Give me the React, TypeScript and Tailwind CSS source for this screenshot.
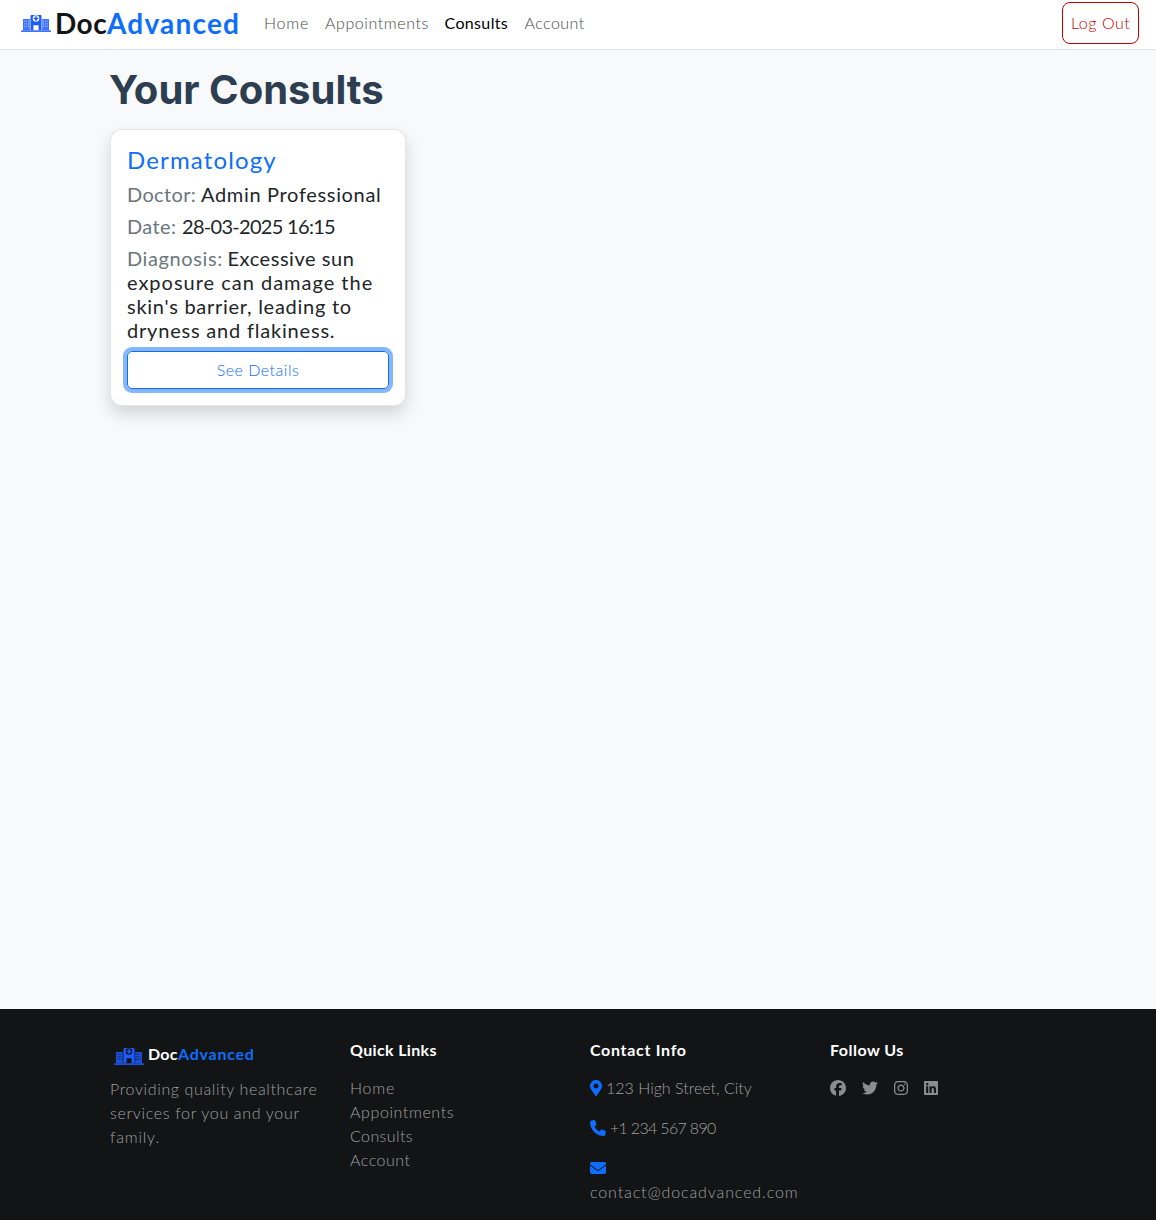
import { FaEnvelope, FaFacebook, FaInstagram, FaLinkedin, FaPhone, FaTwitter } from "react-icons/fa6";
import { FaMapMarkerAlt } from "react-icons/fa";

function HospitalIcon() {
  return (
    <svg viewBox="0 0 30 17" className="block h-[17px] w-[30px] shrink-0" fill="#1c5bff">
      <path fillOpacity="0.85" d="M2 4h6.800v11.300H2zM21.200 4H28v11.300h-6.800z" />
      <path
        fillRule="evenodd"
        d="M9.500 1q0-1 1-1h9q1 0 1 1v14.300h-2.900V10.200h-5.200v5.100H9.500zM15 .2a3.300 3.300 0 1 0 0 6.600a3.300 3.300 0 0 0 0-6.600z"
      />
      <path d="M14.200 1.200h1.600v1.500h1.500v1.600h-1.500v1.500h-1.600V4.300h-1.500V2.700h1.500z" />
      <path
        className="fill-white/45 in-[footer]:fill-[#121416]/55"
        d="M3.200 5.600h1.200v1.200H3.200zM5.100 5.600h1.200v1.200H5.100zM7 5.600h1.200v1.200H7zM3.200 8.200h1.200v1.200H3.200zM5.100 8.200h1.200v1.200H5.100zM7 8.200h1.200v1.200H7zM3.200 10.800h1.200V12H3.200zM5.100 10.800h1.200V12H5.100zM7 10.800h1.200V12H7zM21.800 5.600H23v1.200h-1.200zM23.700 5.600h1.200v1.200h-1.200zM25.600 5.600h1.200v1.200h-1.200zM21.800 8.200H23v1.200h-1.200zM23.700 8.200h1.200v1.200h-1.200zM25.600 8.200h1.200v1.200h-1.200zM21.800 10.800H23V12h-1.200zM23.700 10.800h1.200V12h-1.200zM25.600 10.800h1.200V12h-1.200z"
      />
      <path fillOpacity="0.85" d="M.6 15.300h28.800q.6 0 .6.900t-.6.800H.6q-.6 0-.6-.8t.6-.9z" />
    </svg>
  );
}

export default function App() {
  return (
    <div className="flex h-[1220px] flex-col overflow-hidden bg-[#f8f9fa] font-['Lato',sans-serif] text-base leading-6 whitespace-nowrap text-[#212529]">
      <header className="flex h-[50px] shrink-0 items-start border-b border-[#dee2e6] bg-white pr-[17px] pl-[21px]">
        <a className="flex h-[46px] w-[235px] items-center">
          <div className="pt-px">
            <HospitalIcon />
          </div>
          <span className="ml-1 flex text-[28px] leading-[42px] font-bold">
            <span className="w-[52px] tracking-[0.5px] text-[#121416]">Doc</span>
            <span className="tracking-[1.2px] text-[#0d6efd]">Advanced</span>
          </span>
        </a>
        <nav className="flex h-[46px] items-center font-light text-[#4a4a4a]">
          <a className="ml-2 w-[61px] tracking-[0.75px]">Home</a>
          <a className="w-[119.500px] tracking-[0.58px]">Appointments</a>
          <a className="w-[80px] font-normal tracking-[0.35px] text-black">Consults</a>
          <a className="tracking-[0.45px]">Account</a>
        </nav>
        <button className="mt-[2px] ml-auto h-[42px] w-[77px] rounded-lg border border-[#c00000] pl-[8px] text-left font-light tracking-[0.55px] text-[#c00000]">
          Log Out
        </button>
      </header>

      <main className="mx-auto w-[936px] grow">
        <h1 className="mt-[16px] -ml-px font-['Inter',sans-serif] text-[40px] leading-[48px] font-bold text-[#2c3e50]">
          Your Consults
        </h1>
        <article className="mt-[15px] h-[277px] w-[296px] rounded-xl border border-black/10 bg-white px-4 pt-[15px] text-xl leading-6 shadow-[0_8px_16px_rgba(0,0,0,0.15)]">
          <h2 className="mb-2 text-2xl leading-[29px] tracking-[1.15px] text-[#0d6efd]">Dermatology</h2>
          <p className="mb-2 flex">
            <span className="w-[74px] tracking-[0.35px] text-[#6c757d]">Doctor:</span>
            <span className="tracking-[0.67px]">Admin Professional</span>
          </p>
          <p className="mb-2 flex">
            <span className="w-[55px] tracking-[0.4px] text-[#6c757d]">Date:</span>
            <span className="tracking-[-0.7px]">28-03-2025 16:15</span>
          </p>
          <div className="mb-[9px]">
            <p className="flex">
              <span className="w-[100.500px] tracking-[0.6px] text-[#6c757d]">Diagnosis:</span>
              <span className="tracking-[0.55px]">Excessive sun</span>
            </p>
            <p className="tracking-[0.99px]">exposure can damage the</p>
            <p className="tracking-[0.73px]">skin's barrier, leading to</p>
            <p className="tracking-[0.8px]">dryness and flakiness.</p>
          </div>
          <button className="block h-[38px] w-full rounded-[5px] border border-[#0d6efd] text-base font-light tracking-[0.5px] text-[#0d6efd] shadow-[0_0_0_4px_#86b7fe]">
            See Details
          </button>
        </article>
      </main>

      <footer className="h-[211px] shrink-0 bg-[#121416] pt-[29px] font-light text-[#a0a0a0]">
        <div className="mx-auto grid w-[960px] grid-cols-4">
          <section className="pl-3">
            <div className="flex h-[30px] items-center pt-[2px] pl-1">
              <div className="pt-[4px]">
                <HospitalIcon />
              </div>
              <span className="ml-1 flex font-bold">
                <span className="w-[30px] tracking-[0.3px] text-white">Doc</span>
                <span className="tracking-[0.75px] text-[#0d6efd]">Advanced</span>
              </span>
            </div>
            <p className="mt-[9px] tracking-[0.63px]">Providing quality healthcare</p>
            <p className="tracking-[0.67px]">services for you and your</p>
            <p className="tracking-[0.8px]">family.</p>
          </section>
          <section className="pl-3">
            <h3 className="mb-[14px] font-bold tracking-[0.35px] text-white">Quick Links</h3>
            <ul>
              <li className="tracking-[0.75px]">Home</li>
              <li className="tracking-[0.6px]">Appointments</li>
              <li className="tracking-[0.4px]">Consults</li>
              <li className="tracking-[0.5px]">Account</li>
            </ul>
          </section>
          <section className="pl-3">
            <h3 className="mb-[14px] font-bold tracking-[0.7px] text-white">Contact Info</h3>
            <p className="mb-4 flex items-center">
              <FaMapMarkerAlt className="mr-1 h-4 w-3 text-[#0d6efd]" />
              <span>123 High Street, City</span>
            </p>
            <p className="mb-4 flex items-center">
              <FaPhone className="mr-1 size-4 text-[#0d6efd]" />
              <span className="tracking-[-0.68px]">+1 234 567 890</span>
            </p>
            <p className="flex h-6 items-center">
              <FaEnvelope className="size-4 text-[#0d6efd]" />
            </p>
            <p className="tracking-[0.88px]">contact@docadvanced.com</p>
          </section>
          <section className="pl-3">
            <h3 className="mb-[14px] font-bold tracking-[0.48px] text-white">Follow Us</h3>
            <div className="flex h-6 items-center gap-4 text-[#8c8c8c]">
              <FaFacebook className="size-4" />
              <FaTwitter className="size-4" />
              <FaInstagram className="h-4 w-[14px]" />
              <FaLinkedin className="h-4 w-[14px]" />
            </div>
          </section>
        </div>
      </footer>
    </div>
  );
}
